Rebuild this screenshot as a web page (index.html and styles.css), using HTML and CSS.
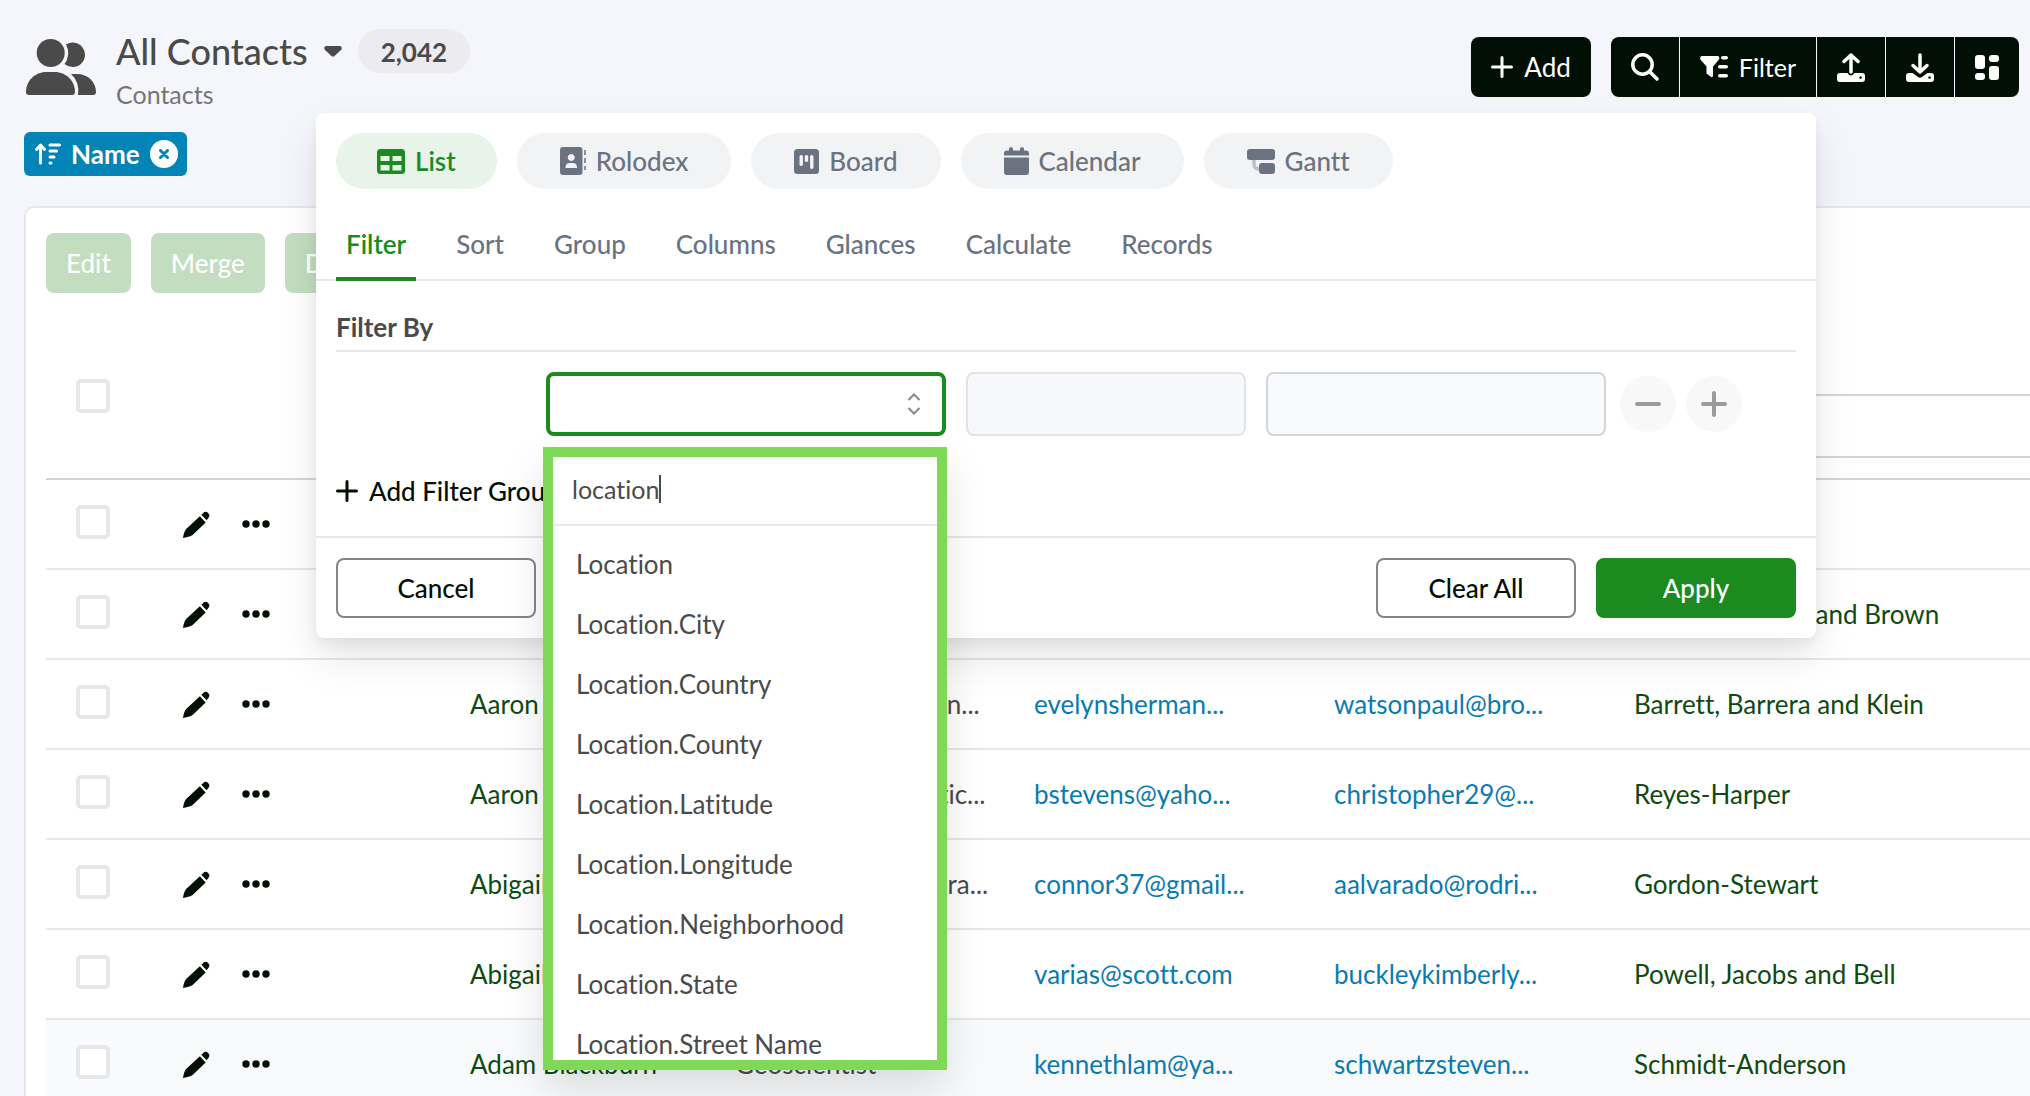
FILE: index.html
```html
<!DOCTYPE html>
<html lang="en">
<head>
<meta charset="utf-8">
<meta name="viewport" content="width=device-width, initial-scale=1">
<title>All Contacts</title>
<link rel="stylesheet" href="styles.css">
</head>
<body>
<svg class="sprite" aria-hidden="true">
  <symbol id="i-pencil" viewBox="0 0 28 28"><path d="M17.500 5.500l6 6.500L10 25Q8 26.500 0 28Q1 21 3.500 18.500zM19 4l2-2q2.500-2.500 5 0t.5 5l-2 2.500z"/></symbol>
  <symbol id="i-dots" viewBox="0 0 28 8"><circle cx="4" cy="4" r="3.700"/><circle cx="14" cy="4" r="3.700"/><circle cx="24" cy="4" r="3.700"/></symbol>
  <symbol id="i-plus" viewBox="0 0 22 22"><path d="M11 1.500v19M1.500 11h19" fill="none" stroke="currentColor" stroke-width="3" stroke-linecap="round"/></symbol>
</svg>

<header class="topbar">
  <svg class="people" viewBox="0 0 70 56" aria-hidden="true">
    <circle cx="24.700" cy="14" r="14"/>
    <path d="M40 5.500a12.300 12.300 0 1 1-1.500 19.500A18 18 0 0 0 40 5.500z"/>
    <path d="M0 53C0 42 9 33 20 33H29C40 33 49 42 49 53Q49 56 46 56H3Q0 56 0 53z"/>
    <path d="M45 35H51C62 35 70 43 70 53Q70 56 67 56H52Q54 43 45 35z"/>
  </svg>
  <div class="heading">
    <div class="title-row">
      <h1>All Contacts</h1>
      <button class="caret" aria-label="Switch view"><svg viewBox="0 0 18 11"><path d="M2 0H16Q19 1 17 4L10.500 10Q9 11.500 7.500 10L1 4Q-1 1 2 0z"/></svg></button>
      <span class="count">2,042</span>
    </div>
    <p class="subtitle">Contacts</p>
  </div>
  <div class="actions">
    <button class="dark add"><svg class="ic22"><use href="#i-plus"/></svg>Add</button>
    <div class="group">
      <button class="dark" aria-label="Search"><svg width="28" height="28" viewBox="0 0 28 28"><g fill="none" stroke="currentColor" stroke-width="3.500" stroke-linecap="round"><circle cx="11.500" cy="11.500" r="9.700"/><path d="M19 19l7 7"/></g></svg></button>
      <div class="filter-anchor">
        <button class="dark"><svg width="28" height="22" viewBox="0 0 28 22"><path d="M1.500 0H18Q20 1 19 3.500L13 10.500V20Q12.500 22 10.500 20.500L6.500 17.500V10.500L.4 3.500Q-.5 1 1.500 0z"/><rect x="21" y="0" width="7" height="3.600" rx="1.800"/><rect x="18" y="9" width="10" height="3.600" rx="1.800"/><rect x="18" y="18" width="10" height="3.600" rx="1.800"/></svg>Filter</button>

        <section class="panel" aria-label="Filter settings">
          <div class="pills">
            <button class="pill on"><svg width="28" height="25" viewBox="0 0 28 25"><path fill-rule="evenodd" d="M3.500 0h21Q28 0 28 3.500v18Q28 25 24.500 25h-21Q0 25 0 21.500v-18Q0 0 3.500 0zM3.500 7v5h9V7zM15.500 7v5h9V7zM3.500 16v5.500h9V16zM15.500 16v5.500h9V16z"/></svg>List</button>
            <button class="pill"><svg width="26" height="28" viewBox="0 0 26 28"><path fill-rule="evenodd" d="M3 0h16.500q3 0 3 3v22q0 3-3 3H3q-3 0-3-3V3Q0 0 3 0zM11.200 7a3.500 3.500 0 1 0 .1 0zM5.500 21h11.500q0-5-4-5H9.500q-4 0-4 5z"/><path d="M25 3v5M25 11v5M25 19v4" fill="none" stroke="currentColor" stroke-width="1.500"/></svg>Rolodex</button>
            <button class="pill"><svg width="25" height="25" viewBox="0 0 25 25"><path fill-rule="evenodd" d="M3.500 0h18Q25 0 25 3.500v18Q25 25 21.500 25h-18Q0 25 0 21.500v-18Q0 0 3.500 0zM5.500 7v9q1.700 2 3.400 0V7q-1.700-2-3.400 0zM10.800 7v5q1.700 2 3.400 0V7q-1.700-2-3.400 0zM16.100 7v12q1.700 2 3.400 0V7q-1.700-2-3.400 0z"/></svg>Board</button>
            <button class="pill"><svg width="25" height="28" viewBox="0 0 25 28"><path d="M0 8.500V6.500Q0 3.500 3 3.500H5V1.500Q7-1.500 9 1.500V3.500H16V1.500Q18-1.500 20 1.500V3.500H22Q25 3.500 25 6.500V8.500zM0 10.500H25V25Q25 28 22 28H3Q0 28 0 25z"/></svg>Calendar</button>
            <button class="pill"><svg width="28" height="25" viewBox="0 0 28 25"><path d="M7 10v5q0 5 5 5h2" fill="none" stroke="currentColor" stroke-width="3.500" opacity=".4"/><rect width="28" height="11" rx="3"/><rect x="12" y="14" width="16" height="11" rx="3"/></svg>Gantt</button>
          </div>
          <nav class="tabs" aria-label="Settings sections">
            <a class="on" href="#filter">Filter</a><a href="#sort">Sort</a><a href="#group">Group</a><a href="#columns">Columns</a><a href="#glances">Glances</a><a href="#calculate">Calculate</a><a href="#records">Records</a>
          </nav>
          <div class="panel-body">
            <h2>Filter By</h2>
            <div class="rule-row">
              <div class="field-wrap">
                <select class="box field" aria-label="Field"><option></option></select>
                <svg class="updown" viewBox="0 0 14 22" aria-hidden="true"><path d="M1.500 7L7 1.500L12.500 7M1.500 15L7 20.500L12.500 15"/></svg>
                <div class="dropdown">
                  <div class="search"><input type="text" value="location" aria-label="Search fields"><span class="cursor"></span></div>
                  <ul>
                    <li>Location</li><li>Location.City</li><li>Location.Country</li><li>Location.County</li><li>Location.Latitude</li><li>Location.Longitude</li><li>Location.Neighborhood</li><li>Location.State</li><li>Location.Street Name</li>
                  </ul>
                </div>
              </div>
              <select class="box operator" aria-label="Operator" disabled><option></option></select>
              <input class="box value" type="text" aria-label="Value">
              <div class="rounds">
                <button class="round" aria-label="Remove filter"><svg viewBox="0 0 26 26"><path d="M2 13h22"/></svg></button>
                <button class="round" aria-label="Add filter"><svg viewBox="0 0 26 26"><path d="M2 13h22M13 2v22"/></svg></button>
              </div>
            </div>
            <button class="add-group"><svg class="ic22"><use href="#i-plus"/></svg>Add Filter Group</button>
          </div>
          <footer class="panel-foot">
            <button class="wide">Cancel</button>
            <button class="wide clear">Clear All</button>
            <button class="wide apply">Apply</button>
          </footer>
        </section>
      </div>
      <button class="dark" aria-label="Import"><svg width="28" height="29" viewBox="0 0 28 29"><path d="M14 2v17M7 8.500L14 2l7 6.500" fill="none" stroke="currentColor" stroke-width="3.500" stroke-linecap="round" stroke-linejoin="round"/><path fill-rule="evenodd" d="M3 20h7.500q3.500 5 7 0H25q3 0 3 3v3q0 3-3 3H3q-3 0-3-3v-3q0-3 3-3zM23.500 23.200a1.300 1.300 0 1 0 .1 0z"/></svg></button>
      <button class="dark" aria-label="Export"><svg width="28" height="29" viewBox="0 0 28 29"><path d="M14 2v17M7 12.500L14 19l7-6.500" fill="none" stroke="currentColor" stroke-width="3.500" stroke-linecap="round" stroke-linejoin="round"/><path fill-rule="evenodd" d="M3 20h3.500l5.500 4q2 1.500 4 0l5.500-4h3.500q3 0 3 3v3q0 3-3 3H3q-3 0-3-3v-3q0-3 3-3zM23.500 23.200a1.300 1.300 0 1 0 .1 0z"/></svg></button>
      <button class="dark last" aria-label="Layout"><svg width="24" height="25" viewBox="0 0 24 25"><rect width="10" height="14" rx="3"/><rect y="18" width="10" height="7" rx="3"/><rect x="14" width="10" height="7" rx="3"/><rect x="14" y="11" width="10" height="14" rx="3"/></svg></button>
    </div>
  </div>
</header>

<div class="tags">
  <span class="tag">
    <svg width="26" height="22" viewBox="0 0 26 22" aria-hidden="true"><g fill="none" stroke="currentColor" stroke-width="3" stroke-linecap="round" stroke-linejoin="round"><path d="M5.500 20V2.500M1.500 6.500l4-4.500l4 4.500M15 2h9.500M15 8h6.500M15 14h4M15 20h1"/></g></svg>
    Name
    <button class="tag-x" aria-label="Remove sort"><svg width="10" height="10" viewBox="0 0 10 10"><path d="M1.500 1.500l7 7M8.500 1.500l-7 7"/></svg></button>
  </span>
</div>

<main class="card">
  <div class="bulk"><button>Edit</button><button>Merge</button><button>Delete</button></div>
  <table>
    <colgroup><col class="c-check"><col class="c-act"><col class="c-name"><col class="c-job"><col class="c-mail"><col class="c-mail"><col></colgroup>
    <thead>
      <tr><th class="check"><input type="checkbox" aria-label="Select all"></th><th></th><th></th><th></th><th></th><th></th><th class="search-cell"><input type="text" aria-label="Search company"></th></tr>
    </thead>
    <tbody>
      <tr><td class="check"><input type="checkbox" aria-label="Select row"></td><td><div class="row-act"><button aria-label="Edit"><svg class="pen"><use href="#i-pencil"/></svg></button><button aria-label="More"><svg class="dots"><use href="#i-dots"/></svg></button></div></td><td></td><td></td><td></td><td></td><td></td></tr>
      <tr><td class="check"><input type="checkbox" aria-label="Select row"></td><td><div class="row-act"><button aria-label="Edit"><svg class="pen"><use href="#i-pencil"/></svg></button><button aria-label="More"><svg class="dots"><use href="#i-dots"/></svg></button></div></td><td></td><td></td><td></td><td></td><td><a class="dk" href="#c2">Sanchez, Oliver and Brown</a></td></tr>
      <tr><td class="check"><input type="checkbox" aria-label="Select row"></td><td><div class="row-act"><button aria-label="Edit"><svg class="pen"><use href="#i-pencil"/></svg></button><button aria-label="More"><svg class="dots"><use href="#i-dots"/></svg></button></div></td><td><a class="dk" href="#p3">Aaron Wells</a></td><td>Designer, education...</td><td><a href="#m3">evelynsherman...</a></td><td><a href="#n3">watsonpaul@bro...</a></td><td><a class="dk" href="#c3">Barrett, Barrera and Klein</a></td></tr>
      <tr><td class="check"><input type="checkbox" aria-label="Select row"></td><td><div class="row-act"><button aria-label="Edit"><svg class="pen"><use href="#i-pencil"/></svg></button><button aria-label="More"><svg class="dots"><use href="#i-dots"/></svg></button></div></td><td><a class="dk" href="#p4">Aaron Wright</a></td><td>Engineer, aeronautic...</td><td><a href="#m4">bstevens@yaho...</a></td><td><a href="#n4">christopher29@...</a></td><td><a class="dk" href="#c4">Reyes-Harper</a></td></tr>
      <tr><td class="check"><input type="checkbox" aria-label="Select row"></td><td><div class="row-act"><button aria-label="Edit"><svg class="pen"><use href="#i-pencil"/></svg></button><button aria-label="More"><svg class="dots"><use href="#i-dots"/></svg></button></div></td><td><a class="dk" href="#p5">Abigail Cole</a></td><td>Programmer, camera...</td><td><a href="#m5">connor37@gmail...</a></td><td><a href="#n5">aalvarado@rodri...</a></td><td><a class="dk" href="#c5">Gordon-Stewart</a></td></tr>
      <tr><td class="check"><input type="checkbox" aria-label="Select row"></td><td><div class="row-act"><button aria-label="Edit"><svg class="pen"><use href="#i-pencil"/></svg></button><button aria-label="More"><svg class="dots"><use href="#i-dots"/></svg></button></div></td><td><a class="dk" href="#p6">Abigail Hunt</a></td><td>Engineer</td><td><a href="#m6">varias@scott.com</a></td><td><a href="#n6">buckleykimberly...</a></td><td><a class="dk" href="#c6">Powell, Jacobs and Bell</a></td></tr>
      <tr class="hover"><td class="check"><input type="checkbox" aria-label="Select row"></td><td><div class="row-act"><button aria-label="Edit"><svg class="pen"><use href="#i-pencil"/></svg></button><button aria-label="More"><svg class="dots"><use href="#i-dots"/></svg></button></div></td><td><a class="dk" href="#p7">Adam Blackburn</a></td><td>Geoscientist</td><td><a href="#m7">kennethlam@ya...</a></td><td><a href="#n7">schwartzsteven...</a></td><td><a class="dk" href="#c7">Schmidt-Anderson</a></td></tr>
    </tbody>
  </table>
</main>
</body>
</html>
```
FILE: styles.css
```css
* { box-sizing: border-box; }
html, body { height: 100%; }
body {
  margin: 0;
  display: flex;
  flex-direction: column;
  overflow: hidden;
  background: #f5f6fb;
  color: #4a4a4a;
  font: 26px/32px Lato, "Open Sans", sans-serif;
  font-variant-ligatures: none;
}
button, input, select { font: inherit; font-variant-ligatures: none; color: inherit; margin: 0; }
button { border: 0; padding: 0; background: none; }
svg { fill: currentColor; flex: none; display: block; }
a { color: #0a7bb0; text-decoration: none; }
h1, h2, p, ul { margin: 0; padding: 0; }
.sprite { position: absolute; width: 0; height: 0; }
.ic22 { width: 22px; height: 22px; }

/* Top bar */
.topbar { flex: none; display: flex; align-items: flex-start; padding: 29px 11px 0 26px; }
.people { width: 70px; height: 56px; margin-top: 10px; }
.heading { margin-left: 20px; }
.title-row { display: flex; align-items: center; height: 44px; }
h1 { font-size: 36px; line-height: 46px; font-weight: 500; }
.caret { margin: 0 16px; }
.caret svg { width: 18px; height: 11px; }
.count {
  padding: 0 23px;
  border-radius: 22px;
  background: #ebebf0;
  line-height: 46px;
  height: 44px;
  font-weight: 700;
}
.subtitle { color: #757575; margin-top: 5px; font-size: 25px; }
.actions { margin-left: auto; padding-top: 8px; display: flex; gap: 20px; color: #fff; }
.dark {
  display: flex;
  align-items: center;
  gap: 11px;
  height: 60px;
  padding: 0 20px;
  background: #020f04;
  color: #fff;
  font-size: 25px;
}
.dark.add { border-radius: 8px; font-size: 26px; }
.group { display: flex; gap: 1px; }
.group > .dark:first-child { border-radius: 8px 0 0 8px; }
.group > .dark.last { border-radius: 0 8px 8px 0; }
.filter-anchor { position: relative; }

/* Filter panel */
.panel {
  position: absolute;
  z-index: 2;
  top: 76px;
  right: 0;
  width: 1500px;
  border-radius: 8px;
  background: #fff;
  color: #4a4a4a;
  box-shadow: 0 20px 40px rgba(0, 0, 0, .1), 0 6px 12px rgba(0, 0, 0, .05);
}
.pills { display: flex; gap: 20px; padding: 20px 20px 0; }
.pill {
  display: flex;
  align-items: center;
  gap: 10px;
  height: 56px;
  padding: 0 43px;
  border-radius: 28px;
  background: #f1f3f5;
  color: #6b7280;
  font-weight: 500;
}
.pill.on { padding: 0 41px; background: #e8f3e9; color: #1c8b1f; font-weight: 600; }
.tabs { display: flex; gap: 30px; margin-top: 36px; padding: 0 20px; border-bottom: 2px solid #e5e7eb; }
.tabs a { height: 56px; padding: 3px 10px 0; margin-bottom: -2px; color: #6b7280; font-weight: 500; line-height: 32px; }
.tabs a.on { color: #1c8b1f; font-weight: 600; border-bottom: 4px solid #1c8b1f; }
.panel-body { padding: 28px 20px 28px; }
h2 { font-size: 26px; line-height: 36px; font-weight: 700; padding-bottom: 5px; border-bottom: 2px solid #e5e7eb; }
.rule-row { display: flex; align-items: center; gap: 20px; padding: 20px 0 0 210px; }
.box { display: block; height: 64px; padding: 0 20px; border: 2px solid #d1d5db; border-radius: 8px; appearance: none; background: #f9fafc; }
.field-wrap { position: relative; width: 400px; }
.field { width: 100%; border: 4px solid #1c8b1f; background: #fff; }
.updown { position: absolute; right: 25px; top: 21px; width: 14px; height: 22px; fill: none; stroke: #7f8792; stroke-width: 2; pointer-events: none; }
.operator { width: 280px; border-color: #e1e3e8; background: #f6f8fa; opacity: 1; }
.value { width: 340px; }
.rounds { display: flex; gap: 10px; margin-left: -6px; }
.round { display: grid; place-items: center; width: 56px; height: 56px; border-radius: 50%; background: #f8f8f8; }
.round svg { width: 26px; height: 26px; fill: none; stroke: #9b9b9b; stroke-width: 4; stroke-linecap: round; }
.add-group { display: flex; align-items: center; gap: 11px; height: 32px; margin-top: 39px; margin-bottom: 1px; color: #020f04; font-weight: 500; }
.panel-foot { display: flex; gap: 20px; padding: 20px; border-top: 2px solid #e5e7eb; }
.wide { width: 200px; height: 60px; border: 2px solid #818781; border-radius: 8px; background: #fff; color: #020f04; font-weight: 500; }
.clear { margin-left: auto; }
.apply { border-color: #1c8b1f; background: #1c8b1f; color: #fff; }

/* Field picker */
.dropdown {
  position: absolute;
  z-index: 3;
  top: 75px;
  left: -3px;
  width: 404px;
  height: 623px;
  overflow: hidden;
  border: 10px solid #7ed957;
  background: #fff;
  box-shadow: 0 20px 40px rgba(0, 0, 0, .12);
}
.search { display: flex; align-items: center; height: 69px; padding: 0 19px 4px; border-bottom: 2px solid #e9eaf0; font-size: 25px; }
.search input { field-sizing: content; border: 0; padding: 0; outline: 0; background: none; }
.cursor { width: 2px; height: 28px; background: #4a4a4a; }
.dropdown ul { list-style: none; padding: 8px 23px; }
.dropdown li { line-height: 60px; }

/* Active sort */
.tags { flex: none; padding: 0 24px; margin-top: 22px; }
.tag {
  display: inline-flex;
  align-items: center;
  gap: 10px;
  height: 44px;
  padding: 0 9px 0 11px;
  border-radius: 6px;
  background: #0284b6;
  color: #fff;
  font-weight: 700;
  vertical-align: top;
}
.tag-x { display: grid; place-items: center; width: 28px; height: 28px; border-radius: 50%; background: #fff; }
.tag-x path { fill: none; stroke: #0284b6; stroke-width: 3; stroke-linecap: round; }

/* Records */
.card { flex: 1; min-height: 0; overflow: hidden; margin: 30px 0 0 24px; padding: 25px 0 0 20px; border: 2px solid #e5e7eb; border-width: 2px 0 0 2px; border-radius: 10px 0 0 0; background: #fff; }
.bulk { display: flex; gap: 20px; margin-bottom: 20px; }
.bulk button { height: 60px; padding: 0 20px; border-radius: 8px; background: #c2ddc0; color: #fff; font-weight: 500; }
table { width: 100%; table-layout: fixed; border-collapse: separate; border-spacing: 0; }
.c-check { width: 137px; }
.c-act { width: 287px; }
.c-name { width: 265px; }
.c-job { width: 299px; }
.c-mail { width: 300px; }
th, td { padding: 0; text-align: left; vertical-align: middle; white-space: nowrap; }
th { height: 167px; border-bottom: 2px solid #d1d5db; }
td { height: 90px; border-bottom: 2px solid #e5e7eb; line-height: 32px; }
.dk { color: #0f4a12; }
td.check { padding: 0 0 4px 30px; }
th.check { padding-left: 30px; }
.check input { display: block; appearance: none; width: 34px; height: 34px; border: 4px solid #e5e7eb; border-radius: 5px; background: #fff; }
.search-cell { vertical-align: bottom; padding-bottom: 20px; }
.search-cell input { display: block; width: 100%; height: 64px; border: 2px solid #d1d5db; border-right: 0; border-radius: 8px 0 0 8px; }
.row-act { display: flex; align-items: center; gap: 32px; color: #020f04; }
.pen { width: 27px; height: 27px; }
.dots { width: 28px; height: 8px; }
.hover { background: #f9fafb; }
```
